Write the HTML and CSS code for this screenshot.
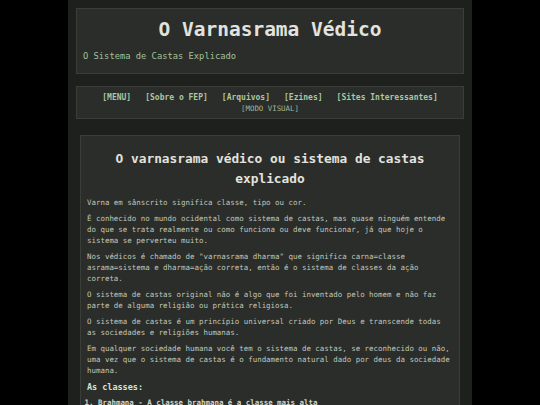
FILE: index.html
```html
<!DOCTYPE html>
<html lang="pt">
<head>
<meta charset="utf-8">
<title>O Varnasrama Védico</title>
<link rel="stylesheet" href="styles.css">
</head>
<body>
<div class="page">
  <header class="header">
    <h1 class="site-title">O Varnasrama Védico</h1>
    <p class="site-sub">O Sistema de Castas Explicado</p>
  </header>
  <nav class="nav">
    <div class="nav-main">
      <a href="#">[MENU]</a>
      <a href="#">[Sobre o FEP]</a>
      <a href="#">[Arquivos]</a>
      <a href="#">[Ezines]</a>
      <a href="#">[Sites Interessantes]</a>
    </div>
    <div class="nav-sub"><a href="#">[MODO VISUAL]</a></div>
  </nav>
  <main class="content">
    <h2 class="post-title">O varnasrama védico ou sistema de castas explicado</h2>
    <p>Varna em sânscrito significa classe, tipo ou cor.</p>
    <p>É conhecido no mundo ocidental como sistema de castas, mas quase ninguém entende do que se trata realmente ou como funciona ou deve funcionar, já que hoje o sistema se perverteu muito.</p>
    <p>Nos védicos é chamado de "varnasrama dharma" que significa carna=classe asrama=sistema e dharma=ação correta, então é o sistema de classes da ação correta.</p>
    <p>O sistema de castas original não é algo que foi inventado pelo homem e não faz parte de alguma religião ou prática religiosa.</p>
    <p>O sistema de castas é um princípio universal criado por Deus e transcende todas as sociedades e religiões humanas.</p>
    <p>Em qualquer sociedade humana você tem o sistema de castas, se reconhecido ou não, uma vez que o sistema de castas é o fundamento natural dado por deus da sociedade humana.</p>
    <h3 class="section-title">As classes:</h3>
    <ol class="classes">
      <li>Brahmana - A classe brahmana é a classe mais alta</li>
    </ol>
  </main>
</div>
</body>
</html>
```
FILE: styles.css
```css
html, body {
  margin: 0;
  padding: 0;
  background: #000;
}
body {
  font-family: "DejaVu Sans Mono", "Liberation Mono", monospace;
  color: #c0c6b9;
}
.page {
  width: 388px;
  margin: 0 auto;
  min-height: 100vh;
  padding: 8px 8px 0;
  background: #1e201d;
  box-sizing: content-box;
}
.header {
  background: #2b2d2a;
  border: 1px solid #3b3d39;
  padding: 9px 6px 11px;
}
.site-title {
  margin: 0;
  text-align: center;
  font-size: 19.5px;
  line-height: 24px;
  font-weight: bold;
  color: #e2e2df;
}
.site-sub {
  margin: 8px 0 0;
  font-size: 8.77px;
  line-height: 12px;
  color: #a3c29b;
}
.nav {
  margin-top: 12px;
  background: #2b2d2a;
  border: 1px solid #3b3d39;
  padding: 5px 6px 4px;
  text-align: center;
}
.nav a {
  color: #a9c7a2;
  text-decoration: none;
}
.nav-main {
  font-size: 8px;
  line-height: 11px;
  font-weight: bold;
}
.nav-main a {
  margin: 0 4.6px;
}
.nav-sub {
  margin-top: 1px;
  font-size: 7.4px;
  line-height: 10px;
}
.nav-sub a {
  color: #9fb899;
}
.content {
  margin: 16px 4px 0;
  background: #2b2d2a;
  border: 1px solid #3b3d39;
  border-bottom: none;
  padding: 13px 6px 10px;
  font-size: 7.45px;
  line-height: 11px;
}
.post-title {
  margin: 0 0 9px;
  text-align: center;
  font-size: 12.84px;
  line-height: 19.5px;
  font-weight: bold;
  color: #e2e2df;
}
.content p {
  margin: 0 0 5px;
}
.section-title {
  margin: 5px 0 4px;
  font-size: 8.46px;
  line-height: 12px;
  font-weight: bold;
  color: #d6e4cf;
}
.classes {
  margin: 0;
  padding-left: 11px;
  font-weight: bold;
  color: #d0d6ca;
}
```
